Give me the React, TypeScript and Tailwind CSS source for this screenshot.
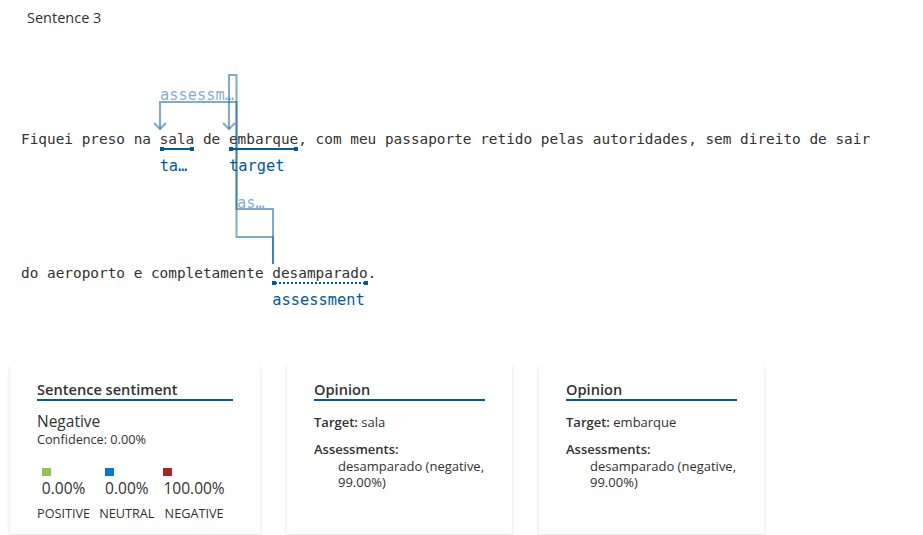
import React from "react";

const MONO = "font-['DejaVu_Sans_Mono',monospace]";
const SANS = "font-['Open_Sans','Noto_Sans',sans-serif]";

function Ann({ word, label, dotted }: { word: string; label: string; dotted?: boolean }) {
  return (
    <span className="relative inline-block">
      {word}
      <span className="absolute left-0 right-0 top-[18px] h-[4px]">
        {dotted ? (
          <span className="absolute left-0 right-0 top-[1px] border-t-2 border-dotted border-[#005a9e]" />
        ) : (
          <span className="absolute left-0 right-0 top-[1px] h-[2px] bg-[#005a9e]" />
        )}
        <span className="absolute left-0 top-0 h-[4px] w-[4px] bg-[#005a9e]" />
        <span className="absolute right-0 top-0 h-[4px] w-[4px] bg-[#005a9e]" />
      </span>
      <span className="absolute left-0 top-[27px] whitespace-nowrap text-[15.36px] leading-[20px] text-[#005a9e]">
        {label}
      </span>
    </span>
  );
}

function Arcs() {
  const c = "#005a9e";
  return (
    <svg
      className="pointer-events-none absolute left-0 top-0"
      width={923}
      height={364}
      viewBox="0 0 923 364"
    >
      <g fill="none" stroke={c} strokeWidth={2} strokeOpacity={0.5}>
        <polyline points="273,264 273,237 236.5,237 236.5,102 160,102 160,129" />
        <polyline points="154,123 160,129 166,123" />
        <polyline points="273,264 273,209 236.5,209 236.5,75 229,75 229,129" />
        <polyline points="223,123 229,129 235,123" />
      </g>
      <g fill={c} fillOpacity={0.5} fontFamily="DejaVu Sans Mono, monospace" fontSize={15.36}>
        <text x={160} y={100}>assessm…</text>
        <text x={237} y={207.5}>as…</text>
      </g>
    </svg>
  );
}

function Heading({ children }: { children: React.ReactNode }) {
  return (
    <div className="border-b-2 border-[#005a9e] text-[14.6px] font-semibold leading-[19px] text-[#323130]">
      {children}
    </div>
  );
}

function Stat({ color, value, label }: { color: string; value: string; label: string }) {
  return (
    <div className="flex flex-col items-center">
      <div className="flex flex-col items-start">
        <div className="h-[8px] w-[9px]" style={{ backgroundColor: color }} />
        <div className="mt-[2px] text-[15.5px] leading-[20px] text-[#323130]">{value}</div>
      </div>
      <div className="mt-[7px] text-[12.7px] leading-[16px] text-[#323130]">{label}</div>
    </div>
  );
}

const CARD =
  "h-[170px] bg-white px-[27px] pt-[16px] shadow-[0_1.6px_3.6px_rgba(0,0,0,0.13),0_0.3px_0.9px_rgba(0,0,0,0.11)]";

function OpinionCard({ target }: { target: string }) {
  return (
    <div className={`${CARD} w-[225px]`}>
      <Heading>Opinion</Heading>
      <div className="mt-[12px] text-[13px] leading-[18px] text-[#323130]">
        <span className="font-semibold">Target:</span> {target}
      </div>
      <div className="mt-[9px] text-[13px] font-semibold leading-[18px] text-[#323130]">Assessments:</div>
      <div className="pl-[24px] text-[13px] leading-[16px] text-[#323130]">desamparado (negative, 99.00%)</div>
    </div>
  );
}

export default function App() {
  return (
    <div className={`relative flex h-[535px] w-[923px] flex-col overflow-hidden bg-white ${SANS}`}>
      <div className="h-[28px] pl-[27px] pt-[8px] text-[14.5px] leading-[20px] text-[#323130]">Sentence 3</div>
      <div className={`flex h-[336px] flex-col pt-[101px] ${MONO} text-[14.4px] leading-[20px] text-[#323130]`}>
        <div className="whitespace-pre pl-[21px]">
          {"Fiquei preso na "}
          <Ann word="sala" label="ta…" />
          {" de "}
          <Ann word="embarque" label="target" />
          {", com meu passaporte retido pelas autoridades, sem direito de sair"}
        </div>
        <div className="mt-[114px] whitespace-pre pl-[21px]">
          {"do aeroporto e completamente "}
          <Ann word="desamparado" label="assessment" dotted />
          {"."}
        </div>
      </div>
      <Arcs />
      <div className="flex gap-[27px] pl-[10px]">
        <div className={`${CARD} w-[250px]`}>
          <Heading>Sentence sentiment</Heading>
          <div className="mt-[10px] text-[15.5px] leading-[20px] text-[#323130]">Negative</div>
          <div className="text-[12.7px] leading-[16px] text-[#323130]">Confidence: 0.00%</div>
          <div className="mt-[21px] flex gap-[9px]">
            <Stat color="#92c353" value="0.00%" label="POSITIVE" />
            <Stat color="#0078d4" value="0.00%" label="NEUTRAL" />
            <Stat color="#a4262c" value="100.00%" label="NEGATIVE" />
          </div>
        </div>
        <OpinionCard target="sala" />
        <OpinionCard target="embarque" />
      </div>
    </div>
  );
}
